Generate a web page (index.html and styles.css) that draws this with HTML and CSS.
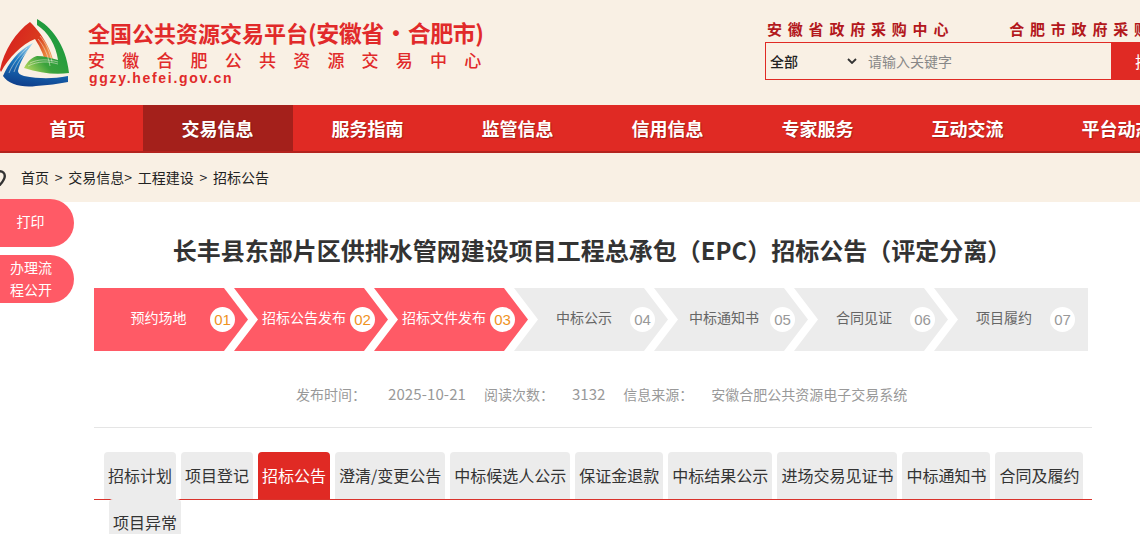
FILE: index.html
```html
<!DOCTYPE html>
<html lang="zh-CN">
<head>
<meta charset="utf-8">
<title>招标公告</title>
<link rel="stylesheet" href="styles.css">
</head>
<body>
<header class="top">
  <svg class="logo" viewBox="0 18 70 70" width="70" height="70" aria-hidden="true">
    <defs>
      <linearGradient id="ga" gradientUnits="userSpaceOnUse" x1="8" y1="45" x2="53" y2="66">
        <stop offset="0" stop-color="#d8261e"/><stop offset="0.5" stop-color="#d93a1e"/><stop offset="0.75" stop-color="#e8803a"/><stop offset="1" stop-color="#f2b070"/>
      </linearGradient>
      <linearGradient id="gb" gradientUnits="userSpaceOnUse" x1="60" y1="40" x2="26" y2="70">
        <stop offset="0" stop-color="#1d9a3e"/><stop offset="0.6" stop-color="#3aa23c"/><stop offset="1" stop-color="#b5d860"/>
      </linearGradient>
      <linearGradient id="gc" gradientUnits="userSpaceOnUse" x1="30" y1="44" x2="24" y2="86">
        <stop offset="0" stop-color="#a8d8f0"/><stop offset="0.4" stop-color="#1a78c0"/><stop offset="1" stop-color="#0f3f8c"/>
      </linearGradient>
    </defs>
    <path fill="url(#ga)" d="M0 70C4 50 16 32 30 22C38 30 52 46 55 69L47 69C45 58 41 48 35 39C22 44 8 58 1 72Z"/>
    <path fill="url(#gb)" d="M37 19C50 26 66 44 69 73C55 75 40 73 24 68C28 60 33 57 37 56C44 56 50 58 58 60C56 45 48 32 37 25Z"/>
    <path fill="url(#gc)" d="M33 43C18 50 8 64 3 76C8 84 22 88 36 86C48 85 58 84 68 82L68 76C52 79 40 79 24 76C20 75 18 73 18 71C20 62 26 52 33 43Z"/>
    <g stroke="#f9f0e4" stroke-width="0.5" fill="none">
      <path d="M38 39C44 46 48 55 50 66M40 36C46 43 50 52 52 62M43 35C48 41 52 49 54 58"/>
      <path d="M28 66C38 61 48 61 58 64M30 63C38 59 48 59 58 62"/>
      <path d="M30 48C23 55 17 63 14 72M27 48C20 55 13 63 9 73"/>
    </g>
  </svg>
  <div class="brand">
    <div class="brand-title">全国公共资源交易平台<span class="brand-region">(安徽省 · 合肥市)</span></div>
    <div class="brand-sub">安徽合肥公共资源交易中心</div>
    <div class="brand-url">ggzy.hefei.gov.cn</div>
  </div>
  <div class="tools">
    <div class="tools-links">
      <a class="tool-link">安徽省政府采购中心</a>
      <a class="tool-link">合肥市政府采购中心</a>
    </div>
    <form class="search">
      <div class="search-box">
        <span class="search-scope">全部</span>
        <svg class="search-caret" viewBox="0 0 10 6" width="10" height="6" aria-hidden="true"><path d="M1 1l4 4 4-4" fill="none" stroke="#333" stroke-width="1.8"/></svg>
        <input class="search-input" type="text" placeholder="请输入关键字">
      </div>
      <button class="search-btn" type="button">搜索</button>
    </form>
  </div>
</header>

<nav class="nav">
  <a class="nav-item">首页</a>
  <a class="nav-item is-active">交易信息</a>
  <a class="nav-item">服务指南</a>
  <a class="nav-item">监管信息</a>
  <a class="nav-item">信用信息</a>
  <a class="nav-item">专家服务</a>
  <a class="nav-item">互动交流</a>
  <a class="nav-item">平台动态</a>
</nav>

<div class="crumbs">
  <svg class="pin" viewBox="0 0 12 16" width="12" height="16" aria-hidden="true"><path d="M6 1.200a4.800 4.800 0 0 1 4.800 4.800c0 3.400-4.800 8.800-4.800 8.800S1.200 9.400 1.200 6A4.800 4.800 0 0 1 6 1.200z" fill="none" stroke="#333" stroke-width="2.400"/></svg>
  <span class="crumbs-text">首页 &gt; 交易信息&gt; 工程建设 &gt; 招标公告</span>
</div>

<aside class="side">
  <a class="side-btn">打印</a>
  <a class="side-btn side-btn-two">办理流<br>程公开</a>
</aside>

<main class="main">
  <h1 class="title">长丰县东部片区供排水管网建设项目工程总承包（EPC）招标公告（评定分离）</h1>
  <ol class="steps">
    <li class="step step-first is-done"><span class="step-label">预约场地</span><span class="step-num">01</span></li>
    <li class="step is-done"><span class="step-label">招标公告发布</span><span class="step-num">02</span></li>
    <li class="step is-done"><span class="step-label">招标文件发布</span><span class="step-num">03</span></li>
    <li class="step"><span class="step-label">中标公示</span><span class="step-num">04</span></li>
    <li class="step"><span class="step-label">中标通知书</span><span class="step-num">05</span></li>
    <li class="step"><span class="step-label">合同见证</span><span class="step-num">06</span></li>
    <li class="step step-last"><span class="step-label">项目履约</span><span class="step-num">07</span></li>
  </ol>
  <div class="meta">
    <span class="meta-label">发布时间：</span><span class="meta-value meta-date">2025-10-21</span>
    <span class="meta-label">阅读次数：</span><span class="meta-value meta-count">3132</span>
    <span class="meta-label">信息来源：</span><span class="meta-value">安徽合肥公共资源电子交易系统</span>
  </div>
  <div class="tabs">
    <a class="tab">招标计划</a>
    <a class="tab">项目登记</a>
    <a class="tab is-active">招标公告</a>
    <a class="tab">澄清/变更公告</a>
    <a class="tab">中标候选人公示</a>
    <a class="tab">保证金退款</a>
    <a class="tab">中标结果公示</a>
    <a class="tab">进场交易见证书</a>
    <a class="tab">中标通知书</a>
    <a class="tab">合同及履约</a>
    <a class="tab tab-wrapped">项目异常</a>
  </div>
</main>
</body>
</html>
```
FILE: styles.css
```css
* { box-sizing: border-box; }
html, body { margin: 0; padding: 0; height: 100%; overflow: hidden; }
body {
  position: relative;
  background: #fff;
  color: #333;
  font-family: "Noto Sans CJK SC", "Liberation Sans", sans-serif;
  font-size: 14px;
}
a { color: inherit; text-decoration: none; }

.top {
  display: flex;
  height: 105px;
  background: #f9f0e4;
  white-space: nowrap;
}
.logo { flex: none; margin-top: 18px; }
.brand { flex: none; width: 400px; margin-left: 18px; color: #e12a2a; }
.brand-title { margin-top: 16px; height: 33px; font-size: 22px; line-height: 32px; font-weight: 700; }
.brand-region { font-size: 23px; word-spacing: -4px; letter-spacing: -.5px; }
.brand-sub { height: 21px; font-size: 17px; line-height: 22px; font-weight: 500; letter-spacing: 17.200px; }
.brand-url { height: 16px; margin-left: 1px; font-family: "Liberation Sans", sans-serif; font-size: 14px; line-height: 16px; font-weight: 700; letter-spacing: 1.700px; }

.tools { flex: none; margin-left: 277px; width: 400px; }
.tools-links { display: flex; gap: 55px; height: 42px; padding: 18px 0 0 2px; }
.tool-link { font-size: 15px; line-height: 22px; font-weight: 700; letter-spacing: 5.800px; color: #b3181c; }
.search { display: flex; height: 38px; }
.search-box {
  display: flex;
  align-items: center;
  flex: none;
  width: 346px;
  border: 1px solid #e02a24;
  border-right: 0;
}
.search-scope { width: 81px; padding-left: 4px; font-size: 14px; font-weight: 500; color: #222; }
.search-caret { flex: none; }
.search-input {
  flex: 1;
  min-width: 0;
  margin-left: 11px;
  padding: 0;
  border: 0;
  outline: 0;
  background: transparent;
  font: 14px "Noto Sans CJK SC", sans-serif;
  color: #333;
}
.search-input::placeholder { color: #888; opacity: 1; }
.search-btn {
  flex: none;
  width: 62px;
  padding: 0 0 0 24px;
  border: 0;
  background: #e02a24;
  color: #fff;
  font: 16px "Noto Sans CJK SC", sans-serif;
  text-align: left;
  white-space: nowrap;
  overflow: hidden;
}

.nav {
  display: flex;
  height: 48px;
  margin-left: -7px;
  width: 1147px;
  overflow: hidden;
  background: #e02a24;
  border-bottom: 2px solid #b3231e;
}
.nav-item {
  flex: none;
  width: 150px;
  height: 46px;
  padding-right: 1px;
  font-size: 18px;
  line-height: 46px;
  font-weight: 700;
  color: #fff;
  text-align: center;
  text-shadow: 1px 1px 1px rgba(90, 20, 10, .45);
}
.nav-item.is-active { background: #a4201b; }

.crumbs {
  display: flex;
  align-items: center;
  height: 49px;
  margin-left: -6px;
  background: #f9f0e4;
  width: 1146px;
}
.pin { flex: none; }
.crumbs-text { margin-left: 15px; font-size: 14px; line-height: 49px; color: #222; word-spacing: 2.600px; }

.side { position: absolute; left: 0; top: 199px; width: 74px; }
.side-btn {
  display: flex;
  align-items: center;
  justify-content: center;
  width: 74px;
  height: 48px;
  margin-bottom: 8px;
  padding: 0 13px 5px 0;
  background: #ff5a66;
  border-radius: 0 24px 24px 0;
  color: #fff;
  font-size: 14px;
  line-height: 22px;
}
.side-btn-two { padding: 0 12px 3px 0; text-align: center; }

.main { padding: 0 48px 0 94px; }
.title {
  margin: 0;
  padding-top: 31px;
  width: 996px;
  height: 86px;
  font-size: 24px;
  line-height: 34px;
  font-weight: 700;
  color: #333;
  text-align: center;
  white-space: nowrap;
}
.steps {
  display: flex;
  margin: 0;
  padding: 0;
  list-style: none;
}
.step {
  flex: none;
  display: flex;
  align-items: center;
  width: 154px;
  height: 63px;
  margin-right: -14px;
  padding-left: 24px;
  background: #ececec;
  color: #666;
  clip-path: polygon(0 0, 130px 0, 154px 50%, 130px 100%, 0 100%, 24px 50%);
}
.step-first { padding-left: 13px; clip-path: polygon(0 0, 130px 0, 154px 50%, 130px 100%, 0 100%); }
.step-last { margin-right: 0; clip-path: polygon(0 0, 100% 0, 100% 100%, 0 100%, 24px 50%); }
.step.is-done { background: #ff5a66; color: #fff; }
.step-label { flex: none; width: 92px; font-size: 14px; line-height: 20px; text-align: center; margin-top: -6px; }
.step-first .step-label { width: 103px; }
.step-num {
  flex: none;
  width: 25px;
  height: 25px;
  border-radius: 50%;
  background: #fff;
  color: #999;
  font-family: "Liberation Sans", sans-serif;
  font-size: 15px;
  line-height: 25px;
  text-align: center;
}
.is-done .step-num { color: #f0921e; }

.meta {
  display: flex;
  height: 77px;
  padding: 31px 0 0 202px;
  width: 998px;
  border-bottom: 1px solid #e5e5e5;
  font-size: 14px;
  line-height: 24px;
  color: #999;
}
.meta-label { flex: none; width: 70px; margin-right: 18px; }
.meta-value { flex: none; margin-right: 18px; }
.meta-date { margin-left: 4px; font-size: 15px; letter-spacing: .1px; }
.meta-count { font-size: 15px; }

.tabs {
  display: flex;
  flex-wrap: wrap;
  align-content: flex-start;
  gap: 0 5px;
  width: 998px;
  height: 48px;
  margin-top: 24px;
  padding-left: 10px;
  border-bottom: 1px solid #d9332c;
}
.tab {
  flex: none;
  height: 47px;
  padding: 0 4px;
  background: #ececec;
  border-radius: 4px 4px 0 0;
  font-size: 16px;
  line-height: 47px;
  color: #333;
}
.tab.is-active { background: #e02a24; color: #fff; }
.tab-wrapped { margin-left: 5px; }
```
